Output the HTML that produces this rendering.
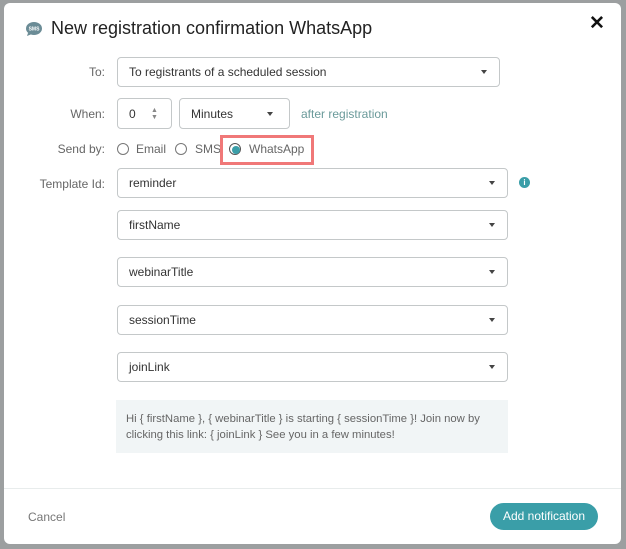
<!DOCTYPE html><html><head><style>
body{margin:0;width:626px;height:549px;background:#9c9fa0;font-family:"Liberation Sans",sans-serif;position:relative;overflow:hidden}
.m{position:absolute;left:4px;top:3px;width:617px;height:541px;background:#fff;border-radius:6px}
.a{position:absolute}
.lbl{position:absolute;font-size:12px;color:#666;text-align:right;width:100px;left:5px}
.sel{position:absolute;border:1px solid #c4c8c9;border-radius:4px;box-sizing:border-box;font-size:12px;color:#333;padding-left:11px;display:flex;align-items:center;background:#fff}
.sel .ar{position:absolute;right:12px;top:50%;margin-top:-2px;border-left:3.5px solid transparent;border-right:3.5px solid transparent;border-top:4px solid #444}
.rad{position:absolute;width:12px;height:12px;border:1px solid #777;border-radius:50%;box-sizing:border-box}
.rt{position:absolute;font-size:12px;color:#666}
</style></head><body>
<div class="m"></div>
<svg class="a" style="left:25px;top:21px" width="18" height="16" viewBox="0 0 18 16"><ellipse cx="9" cy="7.5" rx="8" ry="6.5" fill="#6b8c96"/><path d="M3 12 L2 15 L7 13Z" fill="#6b8c96"/><text x="9" y="9.5" font-size="5" fill="#fff" text-anchor="middle" font-family="Liberation Sans" font-weight="bold">SMS</text></svg>
<div class="a" style="left:51px;top:18px;font-size:18px;color:#222">New registration confirmation WhatsApp</div>
<div class="a" style="left:589px;top:12px;font-size:19px;font-weight:bold;color:#111">✕</div>
<div class="lbl" style="top:65px">To:</div>
<div class="sel" style="left:117px;top:57px;width:383px;height:30px">To registrants of a scheduled session<span class="ar"></span></div>
<div class="lbl" style="top:107px">When:</div>
<div class="sel" style="left:117px;top:98px;width:55px;height:31px">0<span class="a" style="left:33px;top:8px;font-size:7px;line-height:7px;color:#888">▲<br>▼</span></div>
<div class="sel" style="left:179px;top:98px;width:111px;height:31px">Minutes<span class="ar" style="right:16px"></span></div>
<div class="rt" style="left:301px;top:107px;color:#6a9a9a">after registration</div>
<div class="lbl" style="top:142px">Send by:</div>
<div class="rad" style="left:117px;top:143px"></div><div class="rt" style="left:136px;top:142px">Email</div>
<div class="rad" style="left:175px;top:143px"></div><div class="rt" style="left:195px;top:142px">SMS</div>
<div class="a" style="left:220px;top:135px;width:94px;height:30px;border:3px solid #f07878;box-sizing:border-box"></div>
<div class="rad" style="left:229px;top:143px;border-color:#555"></div><div class="a" style="left:232px;top:146px;width:8px;height:8px;border-radius:50%;background:#3a9ea8"></div>
<div class="rt" style="left:249px;top:142px">WhatsApp</div>
<div class="lbl" style="top:177px">Template Id:</div>
<div class="sel" style="left:117px;top:168px;width:391px;height:30px">reminder<span class="ar"></span></div>
<div class="a" style="left:519px;top:177px;width:11px;height:11px;border-radius:50%;background:#3a9ea8;color:#fff;font-size:8px;font-weight:bold;text-align:center;line-height:11px">i</div>
<div class="sel" style="left:117px;top:210px;width:391px;height:30px">firstName<span class="ar"></span></div>
<div class="sel" style="left:117px;top:257px;width:391px;height:30px">webinarTitle<span class="ar"></span></div>
<div class="sel" style="left:117px;top:305px;width:391px;height:30px">sessionTime<span class="ar"></span></div>
<div class="sel" style="left:117px;top:352px;width:391px;height:30px">joinLink<span class="ar"></span></div>
<div class="a" style="left:116px;top:400px;width:392px;height:53px;background:#f1f5f6;box-sizing:border-box;padding:11px 10px;font-size:11.3px;line-height:16px;color:#666">Hi { firstName }, { webinarTitle } is starting { sessionTime }! Join now by clicking this link: { joinLink } See you in a few minutes!</div>
<div class="a" style="left:4px;top:488px;width:617px;height:1px;background:#e8ecec"></div>
<div class="rt" style="left:28px;top:510px;color:#777">Cancel</div>
<div class="a" style="left:490px;top:503px;width:108px;height:27px;border-radius:14px;background:#3a9ea8;color:#fff;font-size:12px;text-align:center;line-height:27px">Add notification</div>
</body></html>
